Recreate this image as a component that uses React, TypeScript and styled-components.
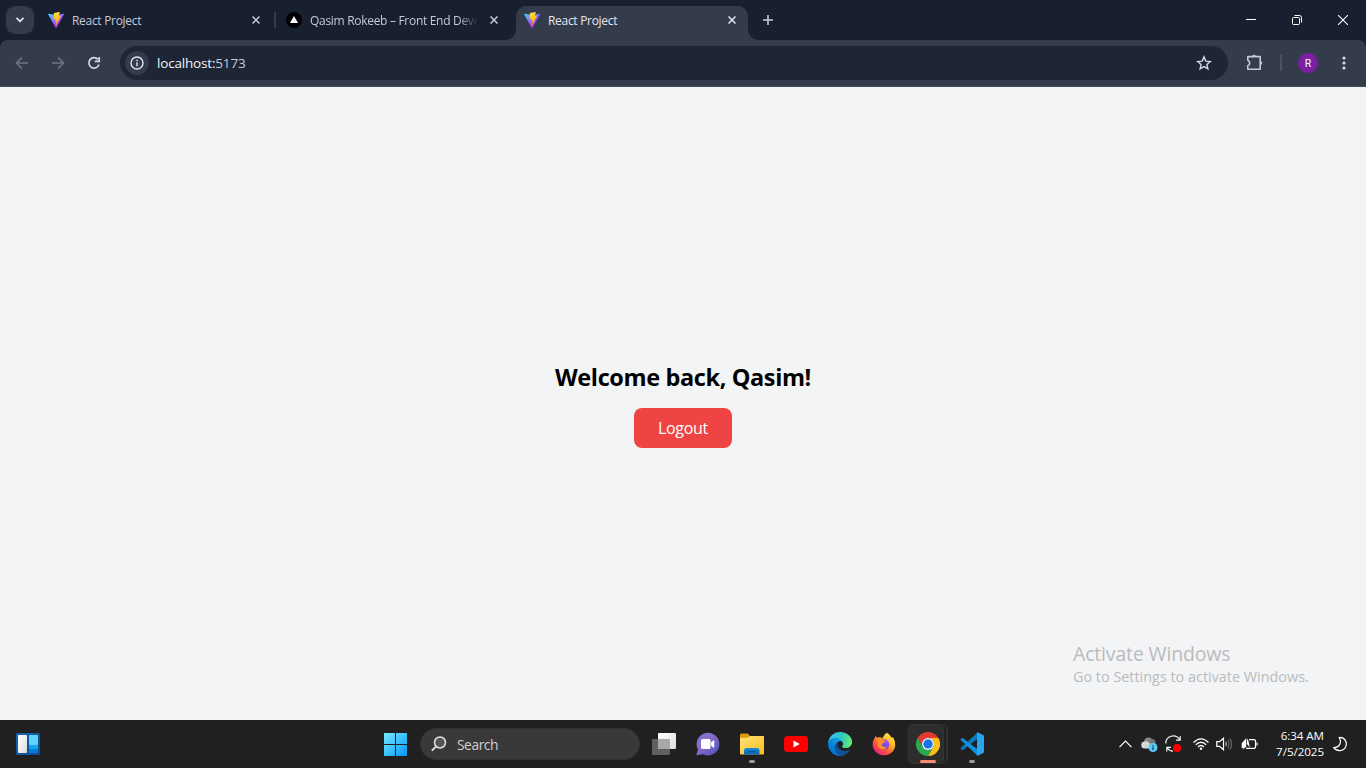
import React from "react";
import styled, { createGlobalStyle } from "styled-components";

const GlobalStyle = createGlobalStyle`
  * { box-sizing: border-box; }
  html, body { margin: 0; padding: 0; overflow: hidden; }
  body { font-family: "Open Sans", "Noto Sans", sans-serif; }
  svg { display: block; flex: none; }
`;

const Screen = styled.div`
  width: 1366px;
  height: 768px;
  display: flex;
  flex-direction: column;
  background: #f3f4f6;
`;

/* Browser chrome */
const TabStrip = styled.header`
  height: 40px;
  flex: none;
  display: flex;
  align-items: center;
  background: #18202f;
  padding-left: 6px;
`;

const TabSearch = styled.button`
  width: 28px;
  height: 28px;
  border: 0;
  padding: 0;
  border-radius: 9px;
  background: #343c4b;
  display: grid;
  place-items: center;
`;

const Tab = styled.div<{ $active?: boolean; $width: number; $padding: string }>`
  position: relative;
  width: ${(p) => p.$width}px;
  height: ${(p) => (p.$active ? 34 : 40)}px;
  align-self: flex-end;
  display: flex;
  align-items: center;
  padding: ${(p) => p.$padding};
  border-radius: 10px 10px 0 0;
  background: ${(p) => (p.$active ? "#343c4b" : "transparent")};
  color: ${(p) => (p.$active ? "#e3e6ee" : "#c3cadb")};
`;

const TabFlare = styled.span<{ $side: "left" | "right" }>`
  position: absolute;
  bottom: 0;
  ${(p) => p.$side}: -10px;
  width: 10px;
  height: 10px;
  background: radial-gradient(
    circle at ${(p) => (p.$side === "left" ? "0 0" : "100% 0")},
    transparent 9.5px,
    #343c4b 10px
  );
`;

const TabTitle = styled.span<{ $fade?: boolean }>`
  flex: 1;
  margin-left: 8px;
  padding-top: 2px;
  font-size: 12px;
  line-height: 18px;
  letter-spacing: -0.3px;
  white-space: nowrap;
  overflow: hidden;
  ${(p) => p.$fade && "mask-image: linear-gradient(90deg, #000 148px, transparent 168px);"}
`;

const TabClose = styled.span`
  width: 16px;
  height: 16px;
  display: grid;
  place-items: center;
  margin-left: 8px;
`;

const Divider = styled.span`
  width: 2px;
  height: 16px;
  background: #343c4b;
`;

const NewTab = styled.span`
  margin-left: 13px;
`;

const WindowControls = styled.div`
  margin-left: auto;
  display: grid;
  grid-template-columns: repeat(3, 46px);
  place-items: center;
`;

const ToolbarBack = styled.div`
  background: #18202f;
  height: 47px;
  flex: none;
`;

const Toolbar = styled.nav`
  height: 47px;
  display: flex;
  align-items: center;
  background: #343c4b;
  border-radius: 8px 8px 0 0;
  border-bottom: 1px solid #454c59;
  padding: 0 14px;
`;

const NavButtons = styled.div`
  display: flex;
  gap: 20px;
  margin-right: 18px;
`;

const AddressBar = styled.div`
  width: 1108px;
  height: 34px;
  border-radius: 17px;
  background: #1e2636;
  display: flex;
  align-items: center;
  padding: 0 16px 0 5px;
  font-size: 13.5px;
  color: #c4c9d4;
`;

const SiteInfo = styled.span`
  width: 24px;
  height: 24px;
  border-radius: 50%;
  background: #343c4b;
  display: grid;
  place-items: center;
  margin-right: 8px;
`;

const Url = styled.span`
  flex: 1;
  letter-spacing: -0.18px;
  b { font-weight: 400; color: #f0f2f6; }
`;

const ToolbarActions = styled.div`
  flex: 1;
  display: flex;
  align-items: center;
  padding-left: 17px;
`;

const ActionDivider = styled.span`
  width: 2px;
  height: 16px;
  margin-left: 15px;
  background: #4b5362;
`;

const Avatar = styled.span`
  width: 20px;
  height: 20px;
  border-radius: 50%;
  background: #7b1fa2;
  color: #fff;
  font: 10.5px/21px Roboto, sans-serif;
  text-align: center;
  margin: 0 24px 0 16px;
`;

/* Page */
const Page = styled.main`
  position: relative;
  flex: 1;
  display: flex;
  flex-direction: column;
  align-items: center;
  justify-content: center;
  gap: 15px;
  padding-top: 2px;
`;

const Heading = styled.h1`
  margin: 0;
  font-size: 23.5px;
  line-height: 32px;
  font-weight: 700;
  letter-spacing: -0.38px;
  color: #000;
  white-space: nowrap;
`;

const LogoutButton = styled.button`
  width: 98px;
  height: 40px;
  border: 0;
  padding: 0;
  border-radius: 8px;
  background: #ef4444;
  color: #fff;
  font: 16px/24px "Open Sans", sans-serif;
  letter-spacing: -0.3px;
`;

const Watermark = styled.aside`
  position: absolute;
  left: 1073px;
  bottom: 33px;
  color: #b9bbbd;
  white-space: nowrap;
`;

const WatermarkTitle = styled.div`
  font-size: 19.5px;
  line-height: 26px;
  letter-spacing: -0.17px;
`;

const WatermarkText = styled.div`
  font-size: 14.4px;
  line-height: 20px;
`;

/* Taskbar */
const Taskbar = styled.footer`
  height: 48px;
  flex: none;
  background: #202020;
  display: flex;
  align-items: center;
  padding-left: 16px;
`;

const AppRow = styled.div`
  display: flex;
  align-items: center;
  margin-left: 343px;
`;

const SearchBox = styled.div`
  width: 220px;
  height: 32px;
  margin: 0 2px 0 13px;
  border-radius: 16px;
  border: 1px solid #333;
  background: #393939;
  color: #cfcfcf;
  font-size: 13.8px;
  display: flex;
  align-items: center;
  gap: 10px;
  padding-left: 10px;
  letter-spacing: -0.45px;
`;

const AppSlot = styled.div<{ $mark?: "idle" | "active" }>`
  position: relative;
  width: 44px;
  height: 48px;
  display: grid;
  place-items: center;
  &::after {
    content: "";
    display: ${(p) => (p.$mark ? "block" : "none")};
    position: absolute;
    bottom: 5px;
    left: ${(p) => (p.$mark === "active" ? 14 : 19)}px;
    width: ${(p) => (p.$mark === "active" ? 16 : 6)}px;
    height: 3px;
    border-radius: 2px;
    background: ${(p) => (p.$mark === "active" ? "#fa8a72" : "#9b9b9b")};
  }
`;

const ActivePlate = styled.div`
  position: absolute;
  left: 2px;
  top: 4px;
  width: 36px;
  height: 40px;
  border-radius: 5px;
  border: 1px solid #343434;
  background: #2d2d2d;
  box-shadow: 3px 0 0 -1px #202020, 4px 0 0 0 #303030;
`;

const Above = styled.div`
  position: relative;
`;

const Tray = styled.div`
  margin-left: auto;
  display: flex;
  align-items: center;
  padding-right: 19px;
`;

const TrayIcon = styled.span<{ $gap: number }>`
  margin-right: ${(p) => p.$gap}px;
`;

const Clock = styled.div`
  width: 52px;
  text-align: right;
  color: #fff;
  font-size: 11.6px;
  line-height: 16px;
  letter-spacing: -0.05px;
  white-space: nowrap;
  margin-right: 9px;
`;

const ViteIcon = () => (
  <svg width="16" height="16" viewBox="0 0 256 257">
    <defs>
      <linearGradient id="viteA" x1="0" x2="0.58" y1="0.03" y2="0.8">
        <stop offset="0" stopColor="#41D1FF" /><stop offset="1" stopColor="#BD34FE" />
      </linearGradient>
      <linearGradient id="viteB" x1="0.43" x2="0.5" y1="0.02" y2="0.9">
        <stop offset="0" stopColor="#FFEA83" /><stop offset="0.08" stopColor="#FFDD35" /><stop offset="1" stopColor="#FFA800" />
      </linearGradient>
    </defs>
    <path fill="url(#viteA)" d="M255.153 37.938L134.897 252.976c-2.483 4.44-8.862 4.466-11.382.048L.875 37.958c-2.746-4.814 1.371-10.646 6.827-9.67l120.385 21.517a6.537 6.537 0 0 0 2.322-.004l117.867-21.483c5.438-.991 9.574 4.796 6.877 9.62Z" />
    <path fill="url(#viteB)" d="M185.432.063L96.44 17.501a3.268 3.268 0 0 0-2.634 3.014l-5.474 92.456a3.268 3.268 0 0 0 3.997 3.378l24.777-5.718c2.318-.535 4.413 1.507 3.936 3.838l-7.361 36.047c-.495 2.426 1.782 4.5 4.151 3.78l15.304-4.649c2.372-.72 4.652 1.36 4.15 3.788l-11.698 56.621c-.732 3.542 3.979 5.473 5.943 2.437l1.313-2.028l72.516-144.72c1.215-2.423-.88-5.186-3.54-4.672l-25.505 4.922c-2.396.462-4.435-1.77-3.759-4.114l16.646-57.705c.677-2.35-1.37-4.583-3.769-4.113Z" />
  </svg>
);

const VercelIcon = () => (
  <svg width="16" height="16" viewBox="0 0 16 16">
    <circle cx="8" cy="8" r="8" fill="#000" />
    <path d="M8 4L12 11H4Z" fill="#fff" />
  </svg>
);

const CloseGlyph = ({ color }: { color: string }) => (
  <svg width="8" height="8" viewBox="0 0 8 8" stroke={color} strokeWidth="1.5">
    <path d="M.5 .5L7.5 7.5M7.5 .5L.5 7.5" />
  </svg>
);

const Arrow = ({ back }: { back?: boolean }) => (
  <svg width="16" height="16" viewBox="0 0 16 16" fill="none" stroke="#6d7482" strokeWidth="1.6">
    <path d={back ? "M14 8H3M8 2.5L2.5 8L8 13.5" : "M2 8H13M8 2.5L13.5 8L8 13.5"} />
  </svg>
);

const Dots = () => (
  <svg width="4" height="14" viewBox="0 0 4 14" fill="#d3d9e8">
    <circle cx="2" cy="2" r="1.6" /><circle cx="2" cy="7" r="1.6" /><circle cx="2" cy="12" r="1.6" />
  </svg>
);

const WidgetsIcon = () => (
  <svg width="24" height="22" viewBox="0 0 24 22">
    <defs>
      <linearGradient id="wg" x1="0" y1="0" x2="1" y2="1"><stop stopColor="#1266ae" /><stop offset="1" stopColor="#0d4b94" /></linearGradient>
      <linearGradient id="ww" x1="0" y1="0" x2="1" y2="1"><stop stopColor="#fff" /><stop offset="1" stopColor="#dedede" /></linearGradient>
    </defs>
    <rect width="24" height="22" rx="1.5" fill="url(#wg)" />
    <rect x="2" y="2" width="9" height="18" rx="1" fill="url(#ww)" />
    <rect x="13" y="2" width="9" height="10" rx="1" fill="#62d3fb" />
    <rect x="13" y="12" width="9" height="4" fill="#16a3ec" />
    <rect x="13" y="16" width="9" height="4" rx="1" fill="#0a7cd8" />
  </svg>
);

const StartIcon = () => (
  <svg width="24" height="24" viewBox="0 0 24 24">
    <defs>
      <linearGradient id="st" gradientUnits="userSpaceOnUse" x1="0" y1="0" x2="24" y2="24">
        <stop stopColor="#7eeaff" /><stop offset=".5" stopColor="#3dc3fc" /><stop offset="1" stopColor="#0a92f8" />
      </linearGradient>
    </defs>
    <path fill="url(#st)" d="M1 1H12V12H1ZM13 1H24V12H13ZM1 13H12V24H1ZM13 13H24V24H13Z" />
  </svg>
);

const SearchIcon = () => (
  <svg width="16" height="16" viewBox="0 0 16 16" fill="none" stroke="#dfe3e6" strokeLinecap="round">
    <circle cx="9" cy="6.5" r="5.5" fill="#555" strokeWidth="1.5" />
    <path d="M5 10.6L1.4 14.2" strokeWidth="1.9" />
  </svg>
);

const TaskViewIcon = () => (
  <svg width="24" height="22" viewBox="0 0 24 22">
    <defs>
      <linearGradient id="tv" x1="0" y1="0" x2="1" y2="1"><stop stopColor="#fff" /><stop offset="1" stopColor="#dcdcdc" /></linearGradient>
    </defs>
    <rect x="6" width="18" height="16" rx="1" fill="url(#tv)" />
    <rect y="6" width="18" height="16" rx="1" fill="#606060" />
    <path d="M6 6H18V16H6Z" fill="#a8a8a8" />
  </svg>
);

const ChatIcon = () => (
  <svg width="24" height="24" viewBox="0 0 24 24">
    <defs>
      <linearGradient id="ch" x1="0" y1="0" x2="1" y2="1"><stop stopColor="#6c79d8" /><stop offset=".35" stopColor="#8a6fc6" /><stop offset="1" stopColor="#4c50bd" /></linearGradient>
    </defs>
    <path d="M12 .8A11.3 11.3 0 1 1 7 22.2L1.2 23.3C.5 23.4 .3 22.9 .5 22.3L2 17.5A11.3 11.3 0 0 1 12 .8Z" fill="url(#ch)" />
    <rect x="5" y="7" width="9.5" height="10" rx="1.5" fill="#fff" />
    <path d="M15 10.6L17.2 8.6Q18.3 8 18.3 9V15Q18.3 16 17.2 15.4L15 13.4Z" fill="#fff" />
  </svg>
);

const FolderIcon = () => (
  <svg width="24" height="22" viewBox="0 0 24 22">
    <defs>
      <linearGradient id="fo" x1="0" y1="0" x2="1" y2="1"><stop stopColor="#ffe27a" /><stop offset="1" stopColor="#fcbd18" /></linearGradient>
      <linearGradient id="fb" x1="0" y1="0" x2="0" y2="1"><stop stopColor="#198ddc" /><stop offset="1" stopColor="#0964b6" /></linearGradient>
    </defs>
    <path d="M0 2Q0 .5 1.5 .5H7.8L10 3H23Q24 3 24 4V9H0Z" fill="#dc9a08" />
    <path d="M0 6Q0 4.8 1 4.8H7.5L10 3H23Q24 3 24 4V20.5Q24 21.5 23 21.5H1Q0 21.5 0 20.5Z" fill="url(#fo)" />
    <path d="M4 21.5V17.5Q4 15 6.5 15H17Q19.5 15 19.5 17.5V21.5Z" fill="url(#fb)" />
    <path d="M8 18.5H16" stroke="#0a58a3" strokeWidth="1.5" />
  </svg>
);

const YouTubeIcon = () => (
  <svg width="24" height="16" viewBox="0 0 24 16">
    <rect width="24" height="16" rx="3.5" fill="#f00" />
    <path d="M9.5 4.5L15.8 8L9.5 11.5Z" fill="#fff" />
  </svg>
);

const EdgeIcon = () => (
  <svg width="24" height="24" viewBox="0 0 256 256">
    <defs>
      <linearGradient id="e1" gradientUnits="userSpaceOnUse" x1="60" y1="177" x2="235" y2="177"><stop stopColor="#0c59a4" /><stop offset="1" stopColor="#114a8b" /></linearGradient>
      <linearGradient id="e2" gradientUnits="userSpaceOnUse" x1="150" y1="100" x2="42" y2="218"><stop stopColor="#1b9de2" /><stop offset=".2" stopColor="#1595df" /><stop offset=".7" stopColor="#0680d7" /><stop offset="1" stopColor="#0078d4" /></linearGradient>
      <linearGradient id="e3" gradientUnits="userSpaceOnUse" x1="20" y1="60" x2="250" y2="110"><stop stopColor="#35c1f1" /><stop offset=".5" stopColor="#2cc6c4" /><stop offset="1" stopColor="#66eb6e" /></linearGradient>
    </defs>
    <path fill="url(#e1)" d="M231 190.500c-3.400 1.800-6.900 3.400-10.500 4.700a101 101 0 0 1-35.800 6.500c-47.100 0-88.200-32.400-88.200-74.100a31.500 31.500 0 0 1 16.400-27.300c-42.700 1.800-53.600 46.200-53.600 72.200 0 73.600 67.800 81.100 82.400 81.100 7.900 0 19.800-2.300 27-4.600l1.300-.4a128.300 128.300 0 0 0 66.600-52.800 4 4 0 0 0-5.600-5.300Z" />
    <path fill="url(#e2)" d="M105.700 241.400a79.200 79.200 0 0 1-22.700-21.300 80.700 80.700 0 0 1 29.900-119.900c3.200-1.500 8.500-4.200 15.600-4.100a32.400 32.400 0 0 1 25.700 13 31.900 31.900 0 0 1 6.300 18.700c0-.2 24.500-79.600-80-79.600C36.600 48.200.5 90 .5 126.200A130.300 130.300 0 0 0 12.600 182a128 128 0 0 0 156.400 67.100 75.500 75.500 0 0 1-63.300-7.700Z" />
    <path fill="url(#e3)" d="M152.300 148.900c-.8 1-3.300 2.500-3.300 5.700 0 2.600 1.700 5.200 4.800 7.300 14.500 10.100 41.900 8.800 42 8.800a60.300 60.300 0 0 0 30.600-8.400 62 62 0 0 0 30.600-53.400c.3-22.400-8-37.300-11.300-43.900C224.400 23.900 178.300.6 128.200.6A128 128 0 0 0 .2 126.800c.5-36.500 36.800-66 80-66 3.500 0 23.400.3 42 10a72.600 72.600 0 0 1 30.900 29.300c6.100 10.600 7.200 24.100 7.200 29.500s-2.700 13.300-8 19.300Z" />
  </svg>
);

const FirefoxIcon = () => (
  <svg width="24" height="24" viewBox="0 0 24 24">
    <defs>
      <linearGradient id="ff" x1=".9" y1=".05" x2=".2" y2="1"><stop stopColor="#fff44f" /><stop offset=".35" stopColor="#ffb42b" /><stop offset=".65" stopColor="#ff5b36" /><stop offset="1" stopColor="#e31587" /></linearGradient>
      <linearGradient id="fp" x1=".7" y1="0" x2=".3" y2="1"><stop stopColor="#9c59ff" /><stop offset="1" stopColor="#6544c6" /></linearGradient>
    </defs>
    <path fill="url(#ff)" d="M15 .7C17.500 2.200 18.800 4 19.300 5.800L20.700 5C22.300 7.200 23.400 10 23.200 13.200C22.800 19 18 23.300 12 23.300C5.800 23.300 .8 18.600 .7 12.700C.6 9.600 1.700 7.300 3 5.700L3.100 3.900L5.200 5.700C7.200 5 9.400 5.400 10.500 6.500C11 4 12.800 2 15 .7Z" />
    <circle cx="12" cy="12.4" r="5.3" fill="url(#fp)" />
    <path fill="#ff8e24" d="M4.500 7C6.800 5.200 9.500 6 10.700 7.700C12.500 7.600 13.600 8.400 13.500 9.300C12.800 10.600 10.700 10.500 10 12C9.200 14.400 12.500 16 15 14.500C13.800 18 9 18.300 6.800 15.500C5.200 13.500 6.500 10.500 4.500 7Z" />
  </svg>
);

const ChromeIcon = () => (
  <svg width="24" height="24" viewBox="0 0 48 48">
    <path fill="#e33b2e" d="M3.200 12A24 24 0 0 1 44.800 12H24A12 12 0 0 0 13.600 30Z" />
    <path fill="#fbc116" d="M44.800 12A24 24 0 0 1 24 48L34.400 30A12 12 0 0 0 24 12Z" />
    <path fill="#2da94f" d="M24 48A24 24 0 0 1 3.200 12L13.600 30A12 12 0 0 0 34.400 30Z" />
    <circle cx="24" cy="24" r="12" fill="#fff" />
    <circle cx="24" cy="24" r="9.500" fill="#1a73e8" />
  </svg>
);

const CodeIcon = () => (
  <svg width="24" height="24" viewBox="0 0 24 24">
    <path fill="#0879bf" d="M.4 16.200L17.500 .5V6.800L3 18L1.700 18Z" />
    <path fill="#1390d9" d="M.4 7.800L1.700 6.300Q2.400 5.900 3 6.300L17.500 17.300V23.500Z" />
    <path fill="#28a5f0" d="M17.500 .3L23.200 2.900Q24 3.300 24 4.200V19.800Q24 20.700 23.200 21.100L17.500 23.800Q16.800 24 17 23.300V.9Q17 .2 17.500 .3Z" />
  </svg>
);

export default function App() {
  return (
    <Screen>
      <GlobalStyle />
      <TabStrip>
        <TabSearch aria-label="Search tabs">
          <svg width="10" height="6" viewBox="0 0 10 6" fill="none" stroke="#e6e9f1" strokeWidth="1.7"><path d="M1.500 .8L5 4.300L8.500 .8" /></svg>
        </TabSearch>
        <Tab $width={240} $padding="0 10px 0 14px">
          <ViteIcon />
          <TabTitle>React Project</TabTitle>
          <TabClose><CloseGlyph color="#c3cadb" /></TabClose>
        </Tab>
        <Divider />
        <Tab $width={240} $padding="0 14px 0 10px">
          <VercelIcon />
          <TabTitle $fade>Qasim Rokeeb – Front End Developer</TabTitle>
          <TabClose><CloseGlyph color="#c3cadb" /></TabClose>
        </Tab>
        <Tab $active $width={232} $padding="0 8px 6px 8px">
          <TabFlare $side="left" />
          <ViteIcon />
          <TabTitle>React Project</TabTitle>
          <TabClose><CloseGlyph color="#e3e6ee" /></TabClose>
          <TabFlare $side="right" />
        </Tab>
        <NewTab>
          <svg width="14" height="12" viewBox="0 0 14 12" stroke="#c3cadb" strokeWidth="1.6"><path d="M2 6H12M7 1V11" /></svg>
        </NewTab>
        <WindowControls>
          <svg width="10" height="10" viewBox="0 0 10 10" stroke="#fff"><path d="M0 4.500H10" /></svg>
          <svg width="10" height="10" viewBox="0 0 10 10" fill="none" stroke="#fff"><rect x=".5" y="2.500" width="7" height="7" rx="1" /><path d="M2.500 .5H7.500Q9.500 .5 9.500 2.500V7.500" /></svg>
          <svg width="10" height="10" viewBox="0 0 10 10" stroke="#fff" strokeWidth="1.100"><path d="M0 0L10 10M10 0L0 10" /></svg>
        </WindowControls>
      </TabStrip>

      <ToolbarBack>
        <Toolbar>
          <NavButtons>
            <Arrow back />
            <Arrow />
            <svg width="16" height="16" viewBox="0 0 16 16" fill="none" stroke="#d3d9e8" strokeWidth="1.700"><path d="M13 9.500A5.200 5.200 0 1 1 12 4.500" /><path d="M13.200 2V6.400H8.800" /></svg>
          </NavButtons>
          <AddressBar>
            <SiteInfo>
              <svg width="14" height="14" viewBox="0 0 14 14" fill="none" stroke="#dfe3ee" strokeWidth="1.400"><circle cx="7" cy="7" r="6" /><path d="M7 6.300V10.300M7 3.700V5.200" /></svg>
            </SiteInfo>
            <Url><b>localhost:</b>5173</Url>
            <svg width="16" height="16" viewBox="0 0 16 16" fill="none" stroke="#d3d7df" strokeWidth="1.400"><path d="M8 1.900L9.800 6.100L14.300 6.500L10.900 9.500L11.900 13.900L8 11.600L4.100 13.900L5.100 9.500L1.700 6.500L6.200 6.100Z" /></svg>
          </AddressBar>
          <ToolbarActions>
            <svg width="20" height="18" viewBox="0 0 20 18" fill="none" stroke="#c3cadb" strokeWidth="1.600" strokeLinejoin="round">
              <path d="M2.800 2.600H15.200V15.200H2.800V11.700Q4.700 11.200 4.700 9T2.800 6.300Z" />
              <path d="M7.300 2.200A1.800 1.500 0 0 1 10.700 2.200ZM15.800 7.300A1.500 1.800 0 0 1 15.800 10.700Z" fill="#c3cadb" strokeWidth=".8" />
            </svg>
            <ActionDivider />
            <Avatar>R</Avatar>
            <Dots />
          </ToolbarActions>
        </Toolbar>
      </ToolbarBack>

      <Page>
        <Heading>Welcome back, Qasim!</Heading>
        <LogoutButton>Logout</LogoutButton>
        <Watermark>
          <WatermarkTitle>Activate Windows</WatermarkTitle>
          <WatermarkText>Go to Settings to activate Windows.</WatermarkText>
        </Watermark>
      </Page>

      <Taskbar>
        <WidgetsIcon />
        <AppRow>
          <StartIcon />
          <SearchBox><SearchIcon />Search</SearchBox>
          <AppSlot><TaskViewIcon /></AppSlot>
          <AppSlot><ChatIcon /></AppSlot>
          <AppSlot $mark="idle"><FolderIcon /></AppSlot>
          <AppSlot><YouTubeIcon /></AppSlot>
          <AppSlot><EdgeIcon /></AppSlot>
          <AppSlot><FirefoxIcon /></AppSlot>
          <AppSlot $mark="active"><ActivePlate /><Above><ChromeIcon /></Above></AppSlot>
          <AppSlot $mark="idle"><CodeIcon /></AppSlot>
        </AppRow>
        <Tray>
          <TrayIcon $gap={9}>
            <svg width="13" height="8" viewBox="0 0 13 8" fill="none" stroke="#fff" strokeWidth="1.200"><path d="M.5 7.200L6.500 1.200L12.500 7.200" /></svg>
          </TrayIcon>
          <TrayIcon $gap={7}>
            <svg width="17" height="16" viewBox="0 0 17 16">
              <circle cx="7.500" cy="6" r="4.500" fill="#8a8a8a" /><circle cx="11" cy="6.500" r="3.500" fill="#777" />
              <path d="M4 5.500A3.500 3.500 0 0 1 7.500 6.500L12 9.500V12.500H3.500A3.500 3.500 0 0 1 4 5.500Z" fill="#d6d6d6" />
              <circle cx="12" cy="11.500" r="4.500" fill="#5bc8f8" /><path d="M12 10.800V14M12 8.900V10.100" stroke="#10465f" strokeWidth="1.300" />
            </svg>
          </TrayIcon>
          <TrayIcon $gap={10}>
            <svg width="18" height="18" viewBox="0 0 18 18" fill="none" stroke="#f3f3f3" strokeWidth="1.200">
              <path d="M.8 8.500A7.400 7.400 0 0 1 14.500 4.500M15.200 1V5.200H11M6 12.300H1.800V16.500M2.200 12.700A7.400 7.400 0 0 0 8 16.200" />
              <circle cx="12" cy="13" r="4" fill="#f00" stroke="none" />
            </svg>
          </TrayIcon>
          <TrayIcon $gap={7}>
            <svg width="16" height="14" viewBox="0 0 16 14" fill="none" stroke="#fff" strokeWidth="1.300">
              <path d="M.5 5.500Q8-1.700 15.500 5.500M2.800 7.800Q8 2.800 13.200 7.800M5 10Q8 7 11 10" /><circle cx="8" cy="11.700" r="1.200" fill="#fff" stroke="none" />
            </svg>
          </TrayIcon>
          <TrayIcon $gap={8}>
            <svg width="17" height="14" viewBox="0 0 17 14" fill="none" strokeWidth="1.200">
              <path d="M.8 4.700H3.500L7.500 1.200V12.800L3.500 9.300H.8Z" stroke="#fff" /><path d="M9.700 4.800Q11 7 9.700 9.200" stroke="#bbb" /><path d="M11.800 3Q14.200 7 11.800 11M13.800 1.300Q17.500 7 13.800 12.700" stroke="#666" />
            </svg>
          </TrayIcon>
          <TrayIcon $gap={14}>
            <svg width="17" height="14" viewBox="0 0 17 14" fill="none" stroke="#fff" strokeWidth="1.200">
              <path d="M8 2.600H13Q14.500 2.600 14.500 4V10Q14.500 11.400 13 11.400H5" /><path d="M16 5.500V8.500" />
              <path d="M5.300 1L.7 6.300V11H2.500L1.500 12.700L5.300 9.500Z" fill="#fff" stroke="none" /><path d="M6 1.500V7L8.800 10.500L7.500 4Z" fill="#fff" stroke="none" />
            </svg>
          </TrayIcon>
          <Clock>6:34 AM<br />7/5/2025</Clock>
          <svg width="14" height="16" viewBox="0 0 14 16" fill="none" stroke="#fff" strokeWidth="1.200">
            <path d="M6.200 1.500C12 1 14.500 6.500 12.700 10.700C10.500 15.500 4 16 .8 11.600C5.500 11.800 9.500 7.500 6.200 1.500Z" />
          </svg>
        </Tray>
      </Taskbar>
    </Screen>
  );
}
